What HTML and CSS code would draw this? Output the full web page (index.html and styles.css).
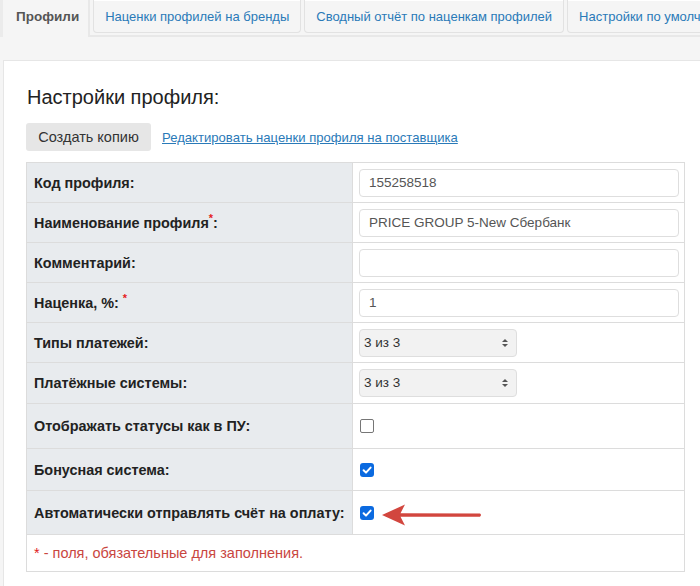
FILE: index.html
```html
<!DOCTYPE html>
<html lang="ru">
<head>
<meta charset="utf-8">
<link rel="stylesheet" href="styles.css">
</head>
<body>
<div class="tabs">
  <div class="tab active">Профили</div>
  <div class="tab">Наценки профилей на бренды</div>
  <div class="tab">Сводный отчёт по наценкам профилей</div>
  <div class="tab">Настройки по умолчанию</div>
</div>
<div class="panel">
  <h2 class="title">Настройки профиля:</h2>
  <div class="actions">
    <button class="btn">Создать копию</button>
    <a class="link" href="#">Редактировать наценки профиля на поставщика</a>
  </div>
  <table class="form">
    <tr class="r40"><th>Код профиля:</th><td><div class="input">155258518</div></td></tr>
    <tr class="r40"><th>Наименование профиля<span class="req">*</span>:</th><td><div class="input">PRICE GROUP 5-New Сбербанк</div></td></tr>
    <tr class="r40"><th>Комментарий:</th><td><div class="input"></div></td></tr>
    <tr class="r40"><th>Наценка, %: <span class="req">*</span></th><td><div class="input">1</div></td></tr>
    <tr class="r40"><th>Типы платежей:</th><td><div class="select">3 из 3<span class="arrows"></span></div></td></tr>
    <tr class="r41"><th>Платёжные системы:</th><td><div class="select">3 из 3<span class="arrows"></span></div></td></tr>
    <tr class="r45"><th>Отображать статусы как в ПУ:</th><td><span class="cb"></span></td></tr>
    <tr class="r42"><th>Бонусная система:</th><td><span class="cb checked"><svg viewBox="0 0 14 14" width="14" height="14"><path d="M3.6 7.3 L6 9.6 L10.6 4.6" fill="none" stroke="#fff" stroke-width="2" stroke-linecap="round" stroke-linejoin="round"/></svg></span></td></tr>
    <tr class="r44"><th>Автоматически отправлять счёт на оплату:</th><td class="rel"><span class="cb checked"><svg viewBox="0 0 14 14" width="14" height="14"><path d="M3.6 7.3 L6 9.6 L10.6 4.6" fill="none" stroke="#fff" stroke-width="2" stroke-linecap="round" stroke-linejoin="round"/></svg></span>
      <svg class="arrow" viewBox="0 0 100 22" width="100" height="22"><path d="M0 11 L23 0.5 L18.5 9.2 L98 9.4 Q100 11 98 12.8 L18.5 12.8 L23 21.5 Z" fill="#d2463e"/></svg>
    </td></tr>
    <tr class="foot"><td colspan="2"><span class="star">*</span> - поля, обязательные для заполнения.</td></tr>
  </table>
</div>
</body>
</html>
```
FILE: styles.css
```css
html, body {
  margin: 0;
  padding: 0;
  background: #f5f5f5;
  overflow: hidden;
  font-family: "Liberation Sans", Arial, sans-serif;
}
.tabs {
  display: flex;
  align-items: flex-start;
  height: 35px;
  border-bottom: 2px solid #e8e8e8;
  white-space: nowrap;
}
.tab {
  flex: none;
  height: 32px;
  line-height: 33px;
  padding: 0 11px;
  margin-right: 3px;
  font-size: 13px;
  color: #2a7ab8;
  background: #f5f5f5;
  border: 1px solid #e2e2e2;
  border-top: none;
  border-radius: 0 0 4px 4px;
  box-shadow: inset 0 1px 0 #fff;
}
.tab.active {
  height: 37px;
  padding: 0 9px 0 13px;
  margin-right: 3px;
  color: #555;
  font-size: 13.5px;
  font-weight: bold;
  border: none;
  border-left: 3px solid #ebebeb;
  border-right: 2px solid #e8e8e8;
  border-radius: 0;
  box-shadow: none;
}
.panel {
  margin: 23px 0 0 3px;
  width: 760px;
  background: #fff;
  border: 1px solid #e6e6e6;
  padding: 25px 0 40px 22px;
}
.title {
  margin: 0 0 15px 1px;
  font-size: 20px;
  line-height: 22px;
  font-weight: normal;
  color: #222;
}
.actions {
  display: flex;
  align-items: center;
  gap: 11px;
  margin-bottom: 11px;
}
.btn {
  height: 28px;
  width: 125px;
  border: none;
  border-radius: 3px;
  background: #e6e6e6;
  color: #333;
  font-family: inherit;
  font-size: 14.5px;
  padding: 0;
}
.link {
  font-size: 13.1px;
  color: #2a7ab8;
  text-decoration: underline;
  margin-top: 1px;
}
.form {
  border-collapse: collapse;
  width: 659px;
  border: 1px solid #dcdcdc;
}
.form th, .form td {
  border: 1px solid #dcdcdc;
  padding: 0;
  vertical-align: middle;
}
.form th {
  width: 318px;
  padding-left: 7px;
  text-align: left;
  background: #e8ebee;
  font-size: 14.4px;
  font-weight: bold;
  color: #222;
}
.form td {
  padding-left: 6px;
  background: #fff;
}
.r40 { height: 40px; }
.r41 { height: 41px; }
.r42 { height: 42px; }
.r44 { height: 44px; }
.r45 { height: 45px; }
.req {
  color: #e52222;
  font-size: 11px;
  vertical-align: top;
  position: relative;
  top: -3px;
}
.input {
  width: 309px;
  height: 26px;
  line-height: 26px;
  border: 1px solid #dedede;
  border-radius: 4px;
  padding-left: 9px;
  font-size: 13.5px;
  color: #555;
}
.select {
  position: relative;
  width: 152px;
  height: 26px;
  line-height: 26px;
  border: 1px solid #dedede;
  border-radius: 4px;
  background: #f2f2f2;
  padding-left: 4px;
  font-size: 13.5px;
  color: #333;
}
.arrows {
  position: absolute;
  right: 11px;
  top: 9px;
  width: 0;
  height: 8px;
}
.arrows::before, .arrows::after {
  content: "";
  position: absolute;
  left: -3px;
  border-left: 3px solid transparent;
  border-right: 3px solid transparent;
}
.arrows::before { top: 0; border-bottom: 3px solid #555; }
.arrows::after { top: 5px; border-top: 3px solid #555; }
.cb {
  display: block;
  width: 12px;
  height: 12px;
  border: 1px solid #767676;
  border-radius: 2px;
  background: #fff;
  margin-left: 1px;
}
.cb.checked {
  width: 14px;
  height: 14px;
  border: none;
  border-radius: 3px;
  background: #0b6ae0;
}
.cb svg { display: block; }
.rel { position: relative; }
.arrow {
  position: absolute;
  left: 29px;
  top: 13px;
}
.foot td {
  height: 36px;
  padding-left: 7px;
  font-size: 14.5px;
  color: #c9463f;
}
.star { color: #e01b1b; }
```
